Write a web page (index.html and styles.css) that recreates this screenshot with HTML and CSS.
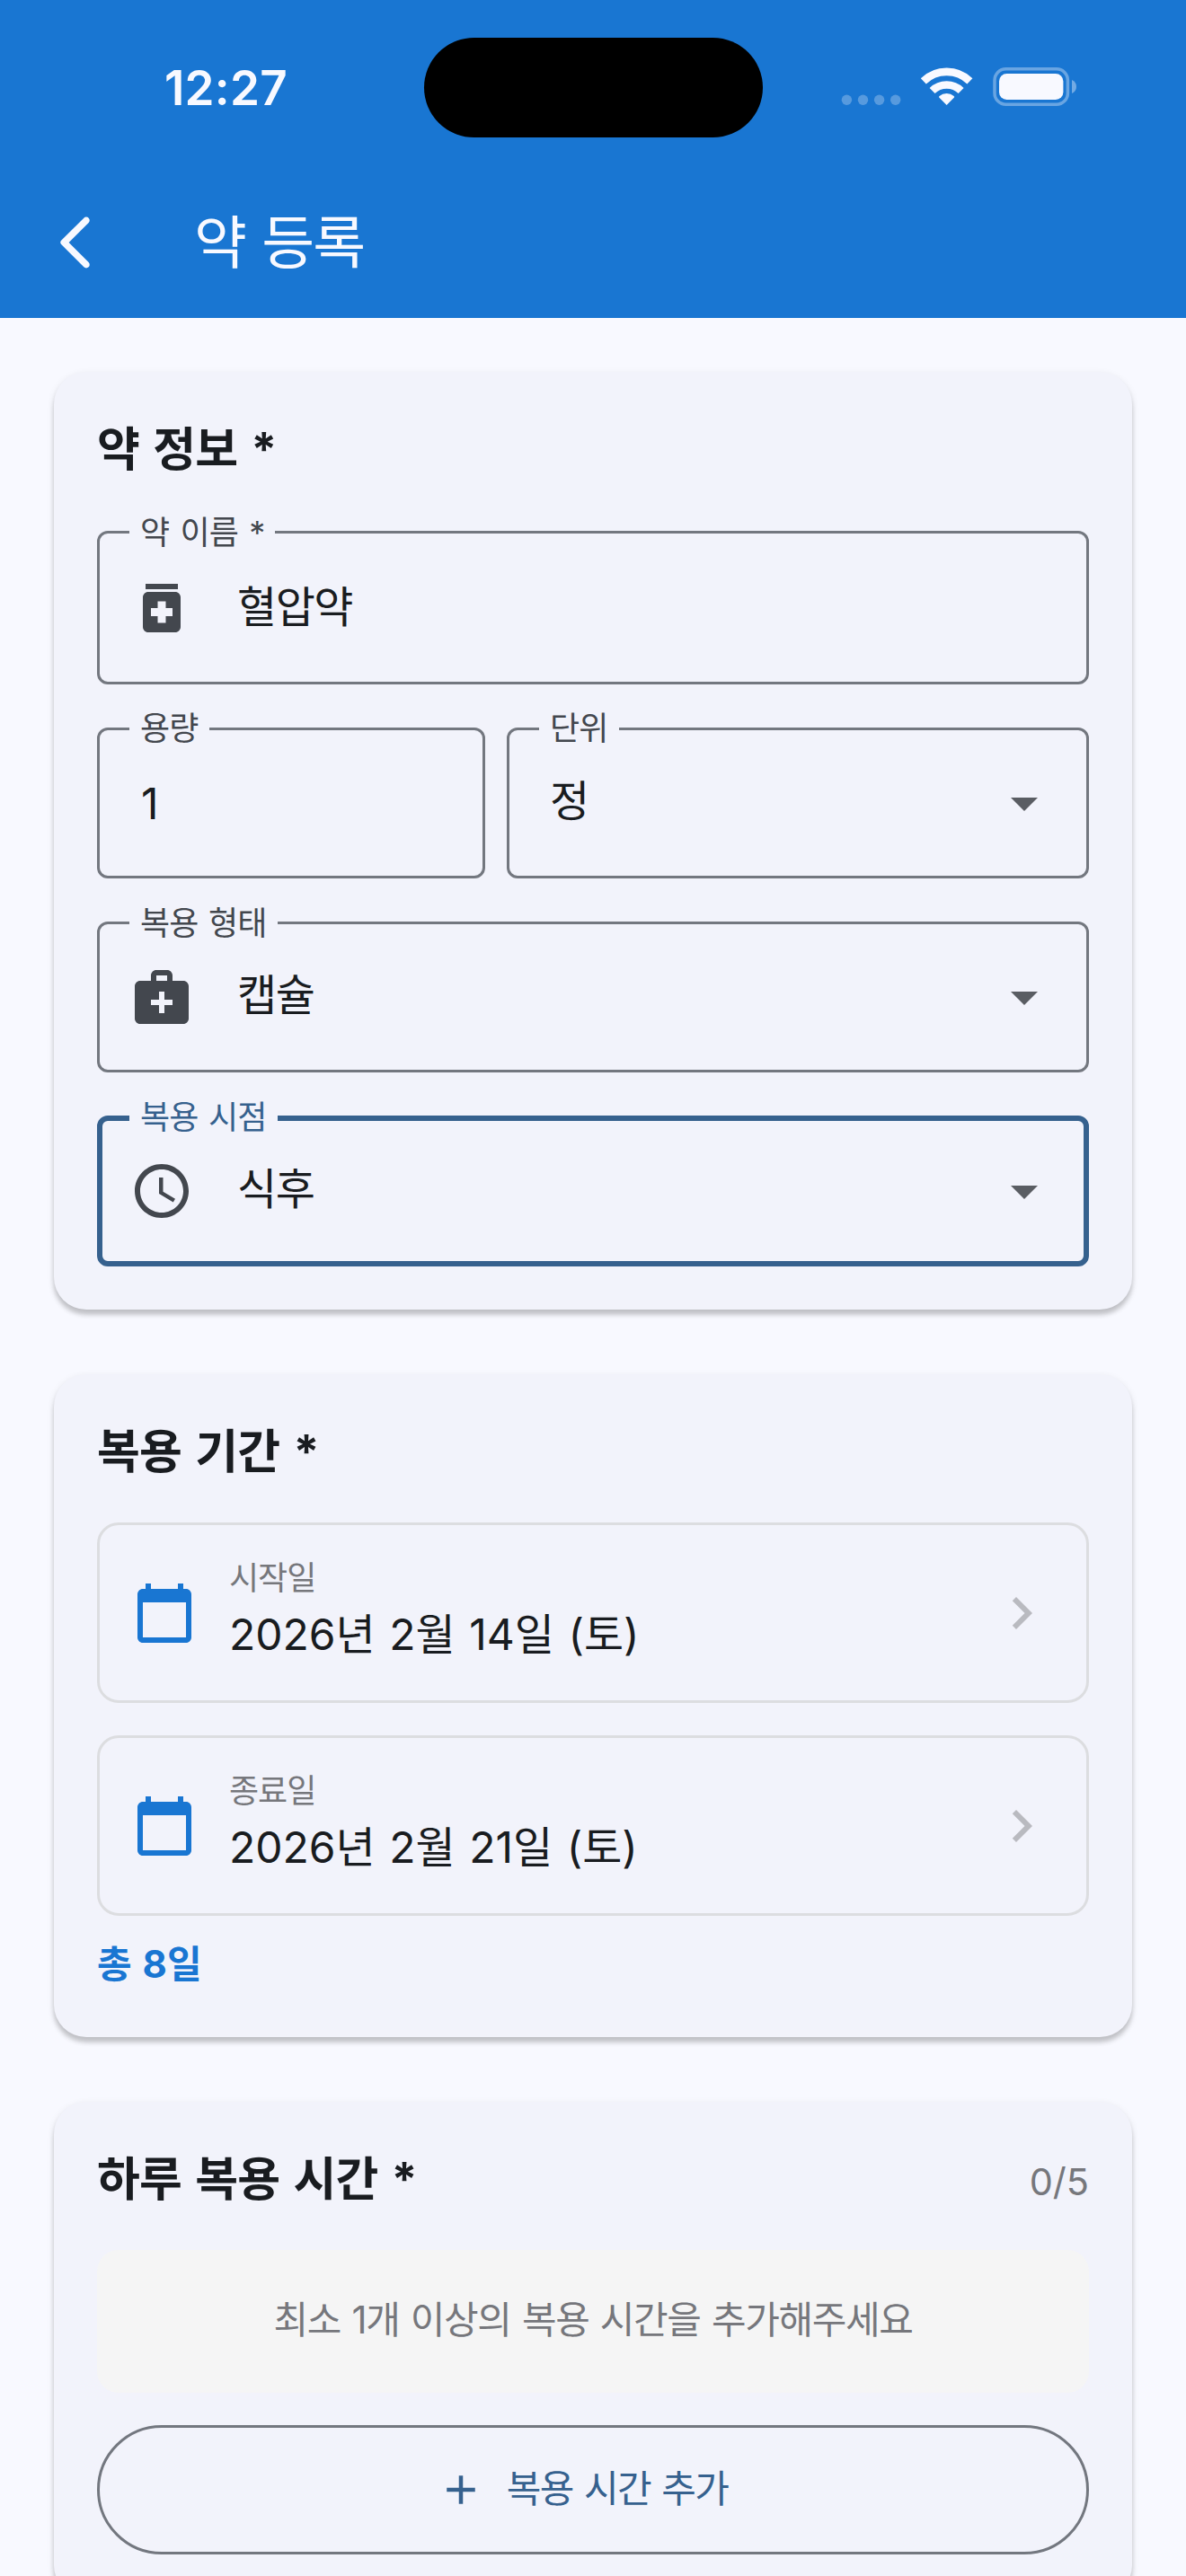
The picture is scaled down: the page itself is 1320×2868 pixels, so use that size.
FILE: index.html
```html
<!DOCTYPE html>
<html lang="ko">
<head>
<meta charset="utf-8">
<title>약 등록</title>
<link rel="stylesheet" href="styles.css">
</head>
<body>
<div class="screen">
  <header class="top">
    <div class="status">
      <span class="clock">12:27</span>
      <span class="island"></span>
      <svg class="indicators" width="264" height="48" viewBox="0 0 264 48">
        <g class="faint">
          <circle cx="6.4" cy="39.3" r="5.7"/><circle cx="24.5" cy="39.3" r="5.7"/><circle cx="42.6" cy="39.3" r="5.7"/><circle cx="60.7" cy="39.3" r="5.7"/>
        </g>
        <g class="wifi">
          <path class="arc" d="M91.8 18.4a37 37 0 0 1 51.6 0"/>
          <path class="arc" d="M101.6 29a23 23 0 0 1 32 0"/>
          <path class="fan" d="M117.6 45l-8.4-8.6q-.5-.8.3-1.4a12.4 12.4 0 0 1 16.2 0q.8.6.3 1.4z"/>
        </g>
        <rect class="case" x="171" y="4.8" width="81.4" height="39.4" rx="12.5"/>
        <rect class="charge" x="176" y="10" width="71.4" height="29" rx="8.5"/>
        <path class="tip" d="M257 17c3.200 1.200 5 4 5 7.500s-1.800 6.300-5 7.500z"/>
      </svg>
    </div>
    <div class="appbar">
      <svg class="icon" viewBox="0 0 24 24"><path d="M16.880 2.880c-.49-.49-1.280-.49-1.770 0l-8.410 8.410c-.39.39-.39 1.020 0 1.410l8.410 8.410c.49.49 1.280.49 1.770 0s.49-1.280 0-1.770L9.540 12l7.350-7.350c.48-.49.48-1.280-.01-1.770z"/></svg>
      <h1 class="title">약 등록</h1>
    </div>
  </header>

  <main class="content">
    <section class="card">
      <h2 class="heading">약 정보 *</h2>
      <div class="fields">
        <div class="field field-tall">
          <span class="label label-required">약 이름 *</span>
          <svg class="icon lead" viewBox="0 0 24 24"><path d="M6 3h12v2H6zM17 6H7c-1.100 0-2 .9-2 2v11c0 1.100.9 2 2 2h10c1.100 0 2-.9 2-2V8c0-1.100-.9-2-2-2zm-1 9h-2.500v2.500h-3V15H8v-3h2.500V9.500h3V12H16v3z"/></svg>
          <span class="value">혈압약</span>
        </div>
        <div class="pair">
          <div class="field plain">
            <span class="label">용량</span>
            <span class="value number">1</span>
          </div>
          <div class="field plain">
            <span class="label">단위</span>
            <span class="value">정</span>
            <svg class="icon drop" viewBox="0 0 24 24"><path d="M7 10l5 5 5-5z"/></svg>
          </div>
        </div>
        <div class="field">
          <span class="label">복용 형태</span>
          <svg class="icon lead" viewBox="0 0 24 24"><path d="M20 6h-4V4c0-1.100-.9-2-2-2h-4c-1.100 0-2 .9-2 2v2H4c-1.100 0-2 .9-2 2v12c0 1.100.9 2 2 2h16c1.100 0 2-.9 2-2V8c0-1.100-.9-2-2-2zM10 4h4v2h-4V4zm6 11h-3v3h-2v-3H8v-2h3v-3h2v3h3v2z"/></svg>
          <span class="value">캡슐</span>
          <svg class="icon drop" viewBox="0 0 24 24"><path d="M7 10l5 5 5-5z"/></svg>
        </div>
        <div class="field focused">
          <span class="label">복용 시점</span>
          <svg class="icon lead" viewBox="0 0 24 24"><path d="M11.990 2C6.470 2 2 6.480 2 12s4.470 10 9.990 10C17.520 22 22 17.520 22 12S17.520 2 11.990 2zM12 20c-4.420 0-8-3.580-8-8s3.580-8 8-8 8 3.580 8 8-3.580 8-8 8zM12.500 7H11v6l5.250 3.150.75-1.230-4.500-2.670z"/></svg>
          <span class="value">식후</span>
          <svg class="icon drop" viewBox="0 0 24 24"><path d="M7 10l5 5 5-5z"/></svg>
        </div>
      </div>
    </section>

    <section class="card">
      <h2 class="heading">복용 기간 *</h2>
      <div class="dates">
        <div class="date">
          <svg class="icon calendar" viewBox="0 0 24 24"><path d="M20 3h-1V1h-2v2H7V1H5v2H4c-1.100 0-2 .9-2 2v16c0 1.100.9 2 2 2h16c1.100 0 2-.9 2-2V5c0-1.100-.9-2-2-2zm0 18H4V8h16v13z"/></svg>
          <div class="date-text">
            <span class="caption">시작일</span>
            <span class="day">2026년 2월 14일 (토)</span>
          </div>
          <svg class="icon chevron" viewBox="0 0 24 24"><path d="M10 6L8.590 7.410 13.170 12l-4.580 4.590L10 18l6-6z"/></svg>
        </div>
        <div class="date">
          <svg class="icon calendar" viewBox="0 0 24 24"><path d="M20 3h-1V1h-2v2H7V1H5v2H4c-1.100 0-2 .9-2 2v16c0 1.100.9 2 2 2h16c1.100 0 2-.9 2-2V5c0-1.100-.9-2-2-2zm0 18H4V8h16v13z"/></svg>
          <div class="date-text">
            <span class="caption">종료일</span>
            <span class="day">2026년 2월 21일 (토)</span>
          </div>
          <svg class="icon chevron" viewBox="0 0 24 24"><path d="M10 6L8.590 7.410 13.170 12l-4.580 4.590L10 18l6-6z"/></svg>
        </div>
      </div>
      <p class="total">총 8일</p>
    </section>

    <section class="card">
      <div class="heading-row">
        <h2 class="heading">하루 복용 시간 *</h2>
        <span class="count">0/5</span>
      </div>
      <p class="empty">최소 1개 이상의 복용 시간을 추가해주세요</p>
      <button class="add" type="button">
        <svg class="plus" viewBox="0 0 24 24"><path d="M19 13h-6v6h-2v-6H5v-2h6V5h2v6h6v2z"/></svg>
        <span class="add-text">복용 시간 추가</span>
      </button>
    </section>
  </main>
</div>
</body>
</html>
```
FILE: styles.css
```css
* { box-sizing: border-box; margin: 0; padding: 0; }

body {
  background: #f8f9ff;
  color: #191c20;
  font-family: Inter, "Noto Sans CJK KR", sans-serif;
}

.screen { width: 1320px; height: 2868px; overflow: hidden; }

.icon { width: 72px; height: 72px; flex: none; display: block; fill: currentColor; }

/* Status bar and app bar */
.top { height: 354px; background: #1976d2; color: #f8f9ff; }

.status { height: 186px; display: flex; align-items: flex-start; }

.clock {
  width: 288.5px;
  margin: 66px 0 0 183px;
  font-size: 53px;
  line-height: 64px;
  font-weight: 600;
  letter-spacing: 0.2px;
}

.island { width: 377px; height: 111px; margin-top: 41.5px; border-radius: 56px; background: #000; }

.indicators { margin: 72px 0 0 87.500px; }
.faint { fill: #f8f9ff; opacity: .28; }
.wifi .arc { fill: none; stroke: #f8f9ff; stroke-width: 8.6px; }
.wifi .fan, .charge { fill: #f8f9ff; }
.case { fill: none; stroke: #f8f9ff; stroke-width: 3.5px; opacity: .36; }
.tip { fill: #f8f9ff; opacity: .4; }

.appbar { height: 168px; padding-left: 48px; display: flex; align-items: center; gap: 96px; }

.title {
  font-size: 64px;
  line-height: 84px;
  font-weight: 400;
  letter-spacing: -1.8px;
  word-spacing: 2px;
}

/* Cards */
.content { padding: 60px; display: flex; flex-direction: column; gap: 72px; }

.card {
  padding: 48px;
  border-radius: 36px;
  background: #f2f3fb;
  box-shadow: 0 6px 5px rgba(0, 0, 0, .17), 0 3px 9px rgba(0, 0, 0, .1);
}

.heading {
  height: 81px;
  font-size: 52px;
  line-height: 77px;
  font-weight: 700;
  letter-spacing: -0.8px;
  word-spacing: 3.6px;
  white-space: nowrap;
}

.fields { margin-top: 48px; display: flex; flex-direction: column; gap: 48px; }

.pair { display: grid; grid-template-columns: 432px 1fr; gap: 24px; }

.field {
  position: relative;
  height: 168px;
  padding: 0 33px;
  border: 3px solid #73777f;
  border-radius: 12px;
  display: flex;
  align-items: center;
}
.field-tall { height: 171px; }
.field.plain { padding-left: 45px; }
.field.focused { padding: 0 30px; border: 6px solid #36618e; }

.label {
  position: absolute;
  left: 33px;
  top: -24px;
  padding: 0 12px;
  background: #f2f3fb;
  color: #43474e;
  font-size: 36px;
  line-height: 46px;
  letter-spacing: -0.8px;
  word-spacing: 2px;
  white-space: nowrap;
}
.label-required { word-spacing: 2.8px; }
.plain .label { top: -25px; }
.focused .label { left: 30px; top: -27px; color: #36618e; }

.lead { margin-right: 48px; color: #43474e; }

.value {
  flex: 1;
  padding-bottom: 4px;
  font-size: 48px;
  line-height: 72px;
  letter-spacing: -1.5px;
}
.field-tall .value { padding-bottom: 2px; }
.number { padding: 2px 0 0 1px; }

.drop { color: #5a5d63; }

/* Period */
.dates { margin-top: 36px; display: flex; flex-direction: column; gap: 36px; }

.date {
  height: 201px;
  padding: 0 36px;
  border: 3px solid #dcdde0;
  border-radius: 24px;
  display: flex;
  align-items: center;
  gap: 36px;
}

.calendar { color: #1976d2; }
.chevron { color: #b9bac0; }

.date-text { flex: 1; display: flex; flex-direction: column; }

.caption { color: #76777c; font-size: 36px; line-height: 45px; letter-spacing: -1px; }

.day { padding-top: 4px; font-size: 48px; line-height: 72px; letter-spacing: 0; word-spacing: 2px; }

.total {
  height: 63px;
  margin-top: 24px;
  color: #1976d2;
  font-size: 42px;
  line-height: 59px;
  font-weight: 700;
  word-spacing: 2px;
}

/* Daily times */
.heading-row { display: flex; justify-content: space-between; align-items: flex-start; }

.count { padding-top: 10px; color: #76777c; font-size: 41.5px; line-height: 62px; }

.empty {
  height: 159px;
  margin-top: 36px;
  border-radius: 24px;
  background: #f5f5f5;
  color: #76777c;
  font-size: 42px;
  line-height: 155px;
  letter-spacing: -1.4px;
  word-spacing: 2px;
  text-align: center;
}

.add {
  width: 100%;
  height: 144px;
  margin-top: 36px;
  padding: 0 72px 0 48px;
  border: 3px solid #73777f;
  border-radius: 72px;
  background: transparent;
  color: #36618e;
  font: 400 42px/60px Inter, "Noto Sans CJK KR", sans-serif;
  display: flex;
  align-items: center;
  justify-content: center;
  gap: 24px;
}

.plus { width: 54px; height: 54px; fill: currentColor; }

.add-text { letter-spacing: -1.6px; word-spacing: 2px; padding-bottom: 3px; }
```
